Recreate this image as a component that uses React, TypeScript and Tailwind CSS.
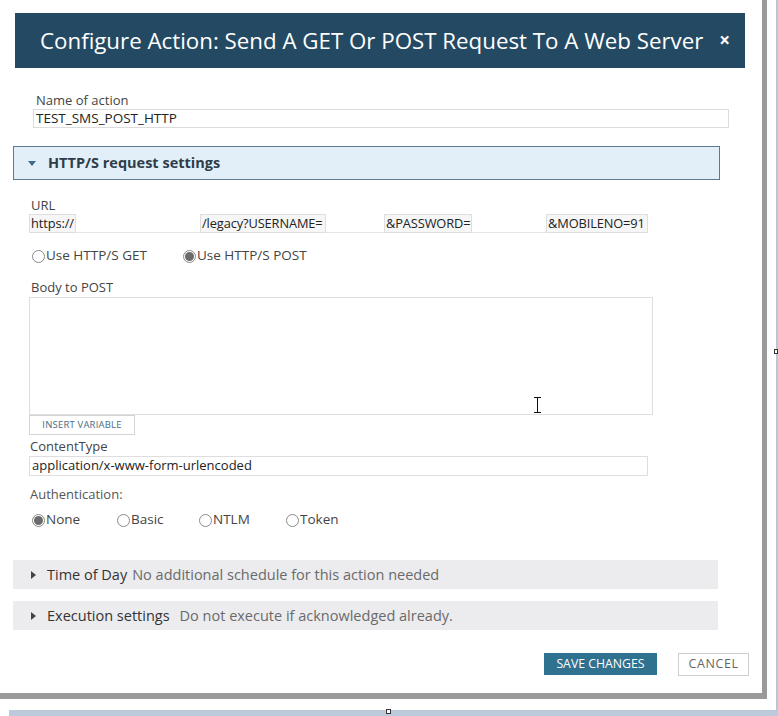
import React from "react";

const font = { fontFamily: '"Open Sans", "Noto Sans", sans-serif' };

function Radio({ checked, label, className = "" }: { checked?: boolean; label: string; className?: string }) {
  return (
    <label className={"flex items-center text-[13.5px] text-[#444] " + className}>
      <span className="flex h-[13px] w-[13px] items-center justify-center rounded-full border border-[#8a8a8a] bg-white">
        {checked && <span className="h-[9px] w-[9px] rounded-full bg-[#6b6b6b]" />}
      </span>
      <span className="ml-[1px] leading-none">{label}</span>
    </label>
  );
}

function Seg({ text, w }: { text: string; w: number }) {
  return (
    <div
      className="flex h-[19px] items-center overflow-hidden whitespace-nowrap border border-[#dedede] bg-[#f6f6f6] pl-[1px] text-[12.8px] tracking-[-0.1px] text-[#222]"
      style={{ width: w }}
    >
      {text}
    </div>
  );
}

function Gap({ w }: { w: number }) {
  return <div className="h-[19px] border-b border-[#e6e6e6] bg-white" style={{ width: w }} />;
}

function Section({ title, desc, gap }: { title: string; desc: string; gap: number }) {
  return (
    <div className="ml-[13px] flex h-[29px] w-[705px] items-center bg-[#ececef] pl-[18px] text-[14.5px]">
      <svg width="5" height="8" viewBox="0 0 5 8" className="mr-[11px]">
        <path d="M0 0 L5 4 L0 8 Z" fill="#444" />
      </svg>
      <span className="text-[#333]">{title}</span>
      <span className="text-[#6a6a6a]" style={{ marginLeft: gap }}>
        {desc}
      </span>
    </div>
  );
}

export default function App() {
  return (
    <div className="relative h-[716px] w-[778px] overflow-hidden bg-white" style={font}>
      {/* background hints */}
      <div className="absolute right-0 top-0 h-[716px] w-[2px] bg-[#b7c6d8]" />
      <div className="absolute bottom-0 left-[9px] h-[6px] w-[769px] bg-[#bccadb]" />
      <div className="absolute left-[386px] top-[709px] h-[5px] w-[5px] border border-[#333] bg-white" />
      <div className="absolute right-0 top-[349px] h-[5px] w-[4px] border border-[#333] bg-white" />

      <div className="h-[699px] w-[767px] border-b-[6px] border-r-[5px] border-[#9a9a9a] bg-white">
        <div className="h-[13px]" />
        <div className="ml-[15px] flex h-[55px] w-[730px] items-center bg-[#244a63] pl-[25px] text-white">
          <span className="whitespace-nowrap text-[22.3px]">
            Configure Action: Send A GET Or POST Request To A Web Server
          </span>
          <span className="ml-auto mr-[15px] text-[19px] font-bold">×</span>
        </div>

        <div className="ml-[36px] mt-[24px] text-[13px] leading-[17px] text-[#444]">Name of action</div>
        <div className="ml-[33px] flex h-[19px] w-[696px] items-center border border-[#dcdcdc] pl-[2px] text-[13.5px] text-[#222]">
          TEST_SMS_POST_HTTP
        </div>

        <div className="ml-[13px] mt-[18px] flex h-[34px] w-[707px] items-center border border-[#5d7a8e] bg-[#e2eff8] pl-[14px]">
          <svg width="8" height="5" viewBox="0 0 8 5" className="mr-[12px]">
            <path d="M0 0 L8 0 L4 5 Z" fill="#3c6a8a" />
          </svg>
          <span className="text-[14.5px] font-bold text-[#2e3d4a]">HTTP/S request settings</span>
        </div>

        <div className="ml-[31px] mt-[17px] text-[13px] leading-[17px] text-[#444]">URL</div>
        <div className="ml-[29px] flex">
          <Seg text="https://" w={47} />
          <Gap w={124} />
          <Seg text="/legacy?USERNAME=" w={126} />
          <Gap w={58} />
          <Seg text="&PASSWORD=" w={88} />
          <Gap w={74} />
          <Seg text="&MOBILENO=91" w={102} />
        </div>

        <div className="ml-[32px] mt-[16px] flex h-[14px]">
          <Radio label="Use HTTP/S GET" className="w-[151px]" />
          <Radio checked label="Use HTTP/S POST" />
        </div>

        <div className="ml-[31px] mt-[16px] text-[13px] leading-[17px] text-[#444]">Body to POST</div>
        <div className="ml-[29px] mt-[1px] h-[118px] w-[624px] border border-[#dedede] bg-white" />
        <div className="ml-[29px] flex h-[20px] w-[106px] items-center justify-center border border-[#d4d4d4] text-[9.5px] tracking-[0.2px] text-[#4b6c82]">
          INSERT VARIABLE
        </div>

        <div className="ml-[30px] mt-[3px] text-[13px] leading-[17px] text-[#444]">ContentType</div>
        <div className="ml-[29px] mt-[1px] flex h-[20px] w-[619px] items-center border border-[#dedede] pl-[2px] text-[13px] text-[#222]">
          application/x-www-form-urlencoded
        </div>

        <div className="ml-[30px] mt-[10px] text-[13px] leading-[17px] text-[#555]">Authentication:</div>
        <div className="ml-[32px] mt-[10px] flex h-[14px]">
          <Radio checked label="None" className="w-[85px]" />
          <Radio label="Basic" className="w-[82px]" />
          <Radio label="NTLM" className="w-[87px]" />
          <Radio label="Token" />
        </div>

        <div className="h-[33px]" />
        <Section title="Time of Day" desc="No additional schedule for this action needed" gap={5} />
        <div className="h-[12px]" />
        <Section title="Execution settings" desc="Do not execute if acknowledged already." gap={10} />

        <div className="mt-[23px] flex justify-end pr-[13px]">
          <div className="flex h-[22px] w-[113px] items-center justify-center bg-[#2f7290] text-[12.3px] text-white">
            SAVE CHANGES
          </div>
          <div className="ml-[21px] flex h-[23px] w-[71px] items-center justify-center border border-[#cfcfcf] bg-white text-[12.5px] tracking-[0.6px] text-[#666]">
            CANCEL
          </div>
        </div>
      </div>

      {/* text cursor */}
      <svg className="absolute left-[533px] top-[397px]" width="9" height="16" viewBox="0 0 9 16">
        <path d="M1 0.5 H8 M4.5 0.5 V15.5 M1 15.5 H8" stroke="#111" strokeWidth="1" fill="none" />
      </svg>
    </div>
  );
}
